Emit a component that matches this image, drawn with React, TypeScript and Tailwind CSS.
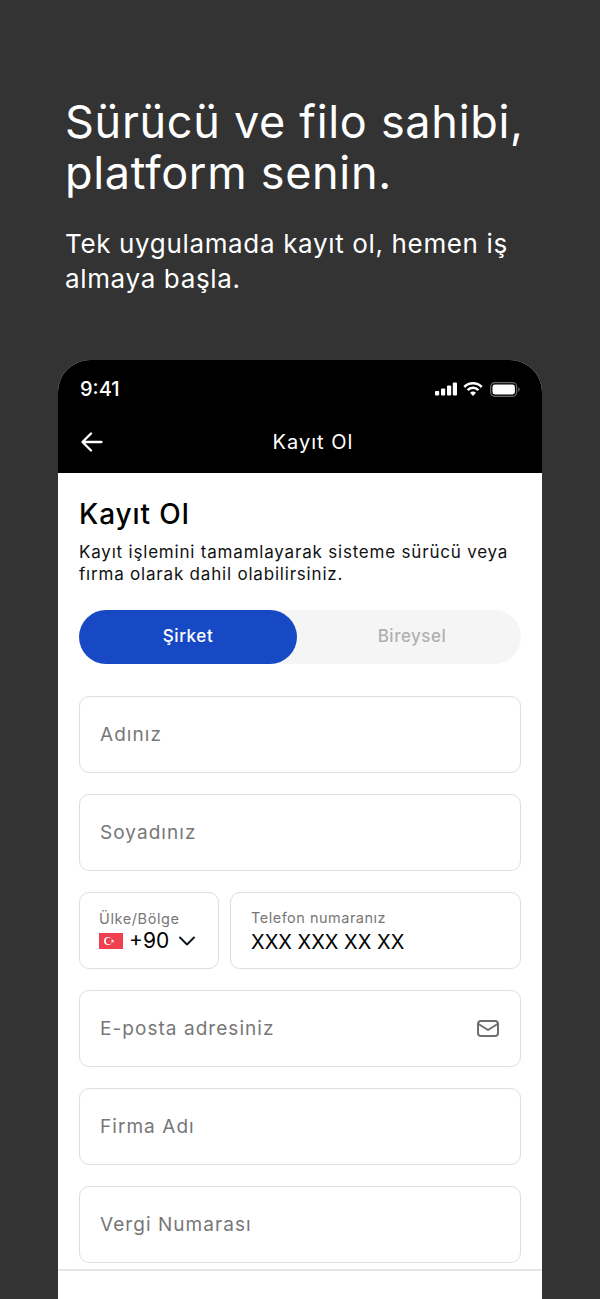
const font = "font-['Inter','Noto_Sans',sans-serif]";

const Field = ({ label, icon }: { label: string; icon?: React.ReactNode }) => (
  <div className="flex h-[77px] items-center justify-between rounded-[10px] border-[1.5px] border-[#dedede] pl-[20px] pr-[21px]">
    <span className="pt-[2px] text-[19px] tracking-[1.05px] text-[#777777]">{label}</span>
    {icon}
  </div>
);

const TurkishFlag = () => (
  <svg width="24" height="16" viewBox="0 0 24 16">
    <rect width="24" height="16" fill="#f0404f" />
    <circle cx="9" cy="8" r="4" fill="#fff" />
    <circle cx="10" cy="8" r="3.2" fill="#f0404f" />
    <path d="M13.6 6.3l.5 1.2 1.3.1-1 .8.3 1.3-1.1-.7-1.1.7.3-1.3-1-.8 1.3-.1z" fill="#fff" />
  </svg>
);

const StatusIcons = () => (
  <div className="flex items-center">
    <svg width="22" height="14" viewBox="0 0 22 14" fill="#fff">
      <rect x="0" y="9" width="4.2" height="4.5" rx="1" />
      <rect x="6" y="6.5" width="4.2" height="7" rx="1" />
      <rect x="12" y="3.5" width="4.2" height="10" rx="1" />
      <rect x="17.8" y="0.5" width="4.2" height="13" rx="1" />
    </svg>
    <svg width="20" height="14" viewBox="0 0 20 14" fill="none" stroke="#fff" strokeWidth="2.5" className="ml-[6px]">
      <path d="M1.3 5a12.2 12.2 0 0 1 17.4 0" />
      <path d="M4.6 8.2a7.4 7.4 0 0 1 10.8 0" />
      <path d="M10 14l-3-3.2a4.1 4.1 0 0 1 6 0z" fill="#fff" stroke="none" />
    </svg>
    <svg width="30" height="15" viewBox="0 0 30 15" fill="none" className="ml-[7px]">
      <rect x="0.7" y="0.7" width="26" height="13.6" rx="4" stroke="#6b6b6b" strokeWidth="1.2" />
      <rect x="2.5" y="2.5" width="22.4" height="10" rx="2.4" fill="#fff" />
      <path d="M28.3 5.2v4.6c.9-.3 1.4-1.3 1.4-2.3s-.5-2-1.4-2.3z" fill="#6b6b6b" />
    </svg>
  </div>
);

export default function App() {
  return (
    <div className={`h-[1299px] overflow-hidden bg-[#333333] ${font}`}>
      <div className="px-[65px] pt-[96px]">
        <h1 className="whitespace-nowrap text-[45px] font-normal leading-[51px] tracking-[0.7px] text-white">
          Sürücü ve filo sahibi,
          <br />
          platform senin.
        </h1>
        <p className="mt-[28px] whitespace-nowrap text-[26px] leading-[35px] tracking-[0.65px] text-white">
          Tek uygulamada kayıt ol, hemen iş
          <br />
          almaya başla.
        </p>
      </div>

      <div className="mx-[58px] mt-[64px] overflow-hidden rounded-t-[32px] bg-white">
        <div className="h-[113px] bg-black px-[22px] pt-[17px] text-white">
          <div className="flex items-center justify-between">
            <span className="text-[20px] font-medium leading-[24px]">9:41</span>
            <StatusIcons />
          </div>
          <div className="relative mt-[25px] flex h-[32px] items-center justify-center">
            <svg width="22" height="22" viewBox="0 0 22 22" fill="none" stroke="#fff" strokeWidth="2.3" strokeLinecap="round" strokeLinejoin="round" className="absolute left-[1px]">
              <path d="M20.5 11H1.5M10 2.5 1.5 11l8.5 8.5" />
            </svg>
            <span className="ml-[26px] text-[20px] tracking-[1px]">Kayıt Ol</span>
          </div>
        </div>

        <div className="border-b-2 border-[#e6e6e6] px-[21px] pb-[6px] pt-[24px]">
          <h2 className="text-[28px] font-medium leading-[34px] tracking-[0.9px] text-black">Kayıt Ol</h2>
          <p className="mt-[10px] whitespace-nowrap text-[17px] leading-[22px] tracking-[0.8px] text-[#111111]">
            Kayıt işlemini tamamlayarak sisteme sürücü veya
            <br />
            fırma olarak dahil olabilirsiniz.
          </p>

          <div className="mt-[25px] flex h-[54px] rounded-full bg-[#f5f5f5]">
            <div className="flex w-[218px] items-center justify-center rounded-full bg-[#1849c4] text-[17px] font-medium tracking-[0.6px] text-white">
              Şirket
            </div>
            <div className="flex flex-1 items-center justify-center pl-[6px] text-[17px] font-medium tracking-[0.5px] text-[#b0b0b0]">
              Bireysel
            </div>
          </div>

          <div className="mt-[32px] flex flex-col gap-[21px]">
            <Field label="Adınız" />
            <Field label="Soyadınız" />
            <div className="flex gap-[11px]">
              <div className="flex h-[77px] w-[140px] flex-col justify-center rounded-[10px] border-[1.5px] border-[#dedede] pl-[19px] pt-[2px]">
                <span className="text-[14.5px] leading-[18px] tracking-[0.6px] text-[#777777]">Ülke/Bölge</span>
                <div className="flex items-center gap-[6px]">
                  <TurkishFlag />
                  <span className="text-[21px] leading-[25px] text-black">+90</span>
                  <svg width="16" height="10" viewBox="0 0 16 10" fill="none" stroke="#111827" strokeWidth="2" strokeLinecap="round" strokeLinejoin="round" className="ml-[4px]">
                    <path d="M1 1.5 8 8.5l7-7" />
                  </svg>
                </div>
              </div>
              <div className="flex h-[77px] flex-1 flex-col justify-center rounded-[10px] border-[1.5px] border-[#dedede] pl-[20px] pt-[5px]">
                <span className="text-[14.5px] leading-[18px] tracking-[0.5px] text-[#777777]">Telefon numaranız</span>
                <span className="text-[20px] leading-[30px] text-black">XXX XXX XX XX</span>
              </div>
            </div>
            <Field
              label="E-posta adresiniz"
              icon={
                <svg width="22" height="18" viewBox="0 0 22 18" fill="none" stroke="#6e6e6e" strokeWidth="2" strokeLinejoin="round" strokeLinecap="round">
                  <rect x="1" y="1" width="20" height="15" rx="3" />
                  <path d="M1.5 4 11 10l9.5-6" />
                </svg>
              }
            />
            <Field label="Firma Adı" />
            <Field label="Vergi Numarası" />
          </div>
        </div>
        <div className="h-[40px] bg-white" />
      </div>
    </div>
  );
}
